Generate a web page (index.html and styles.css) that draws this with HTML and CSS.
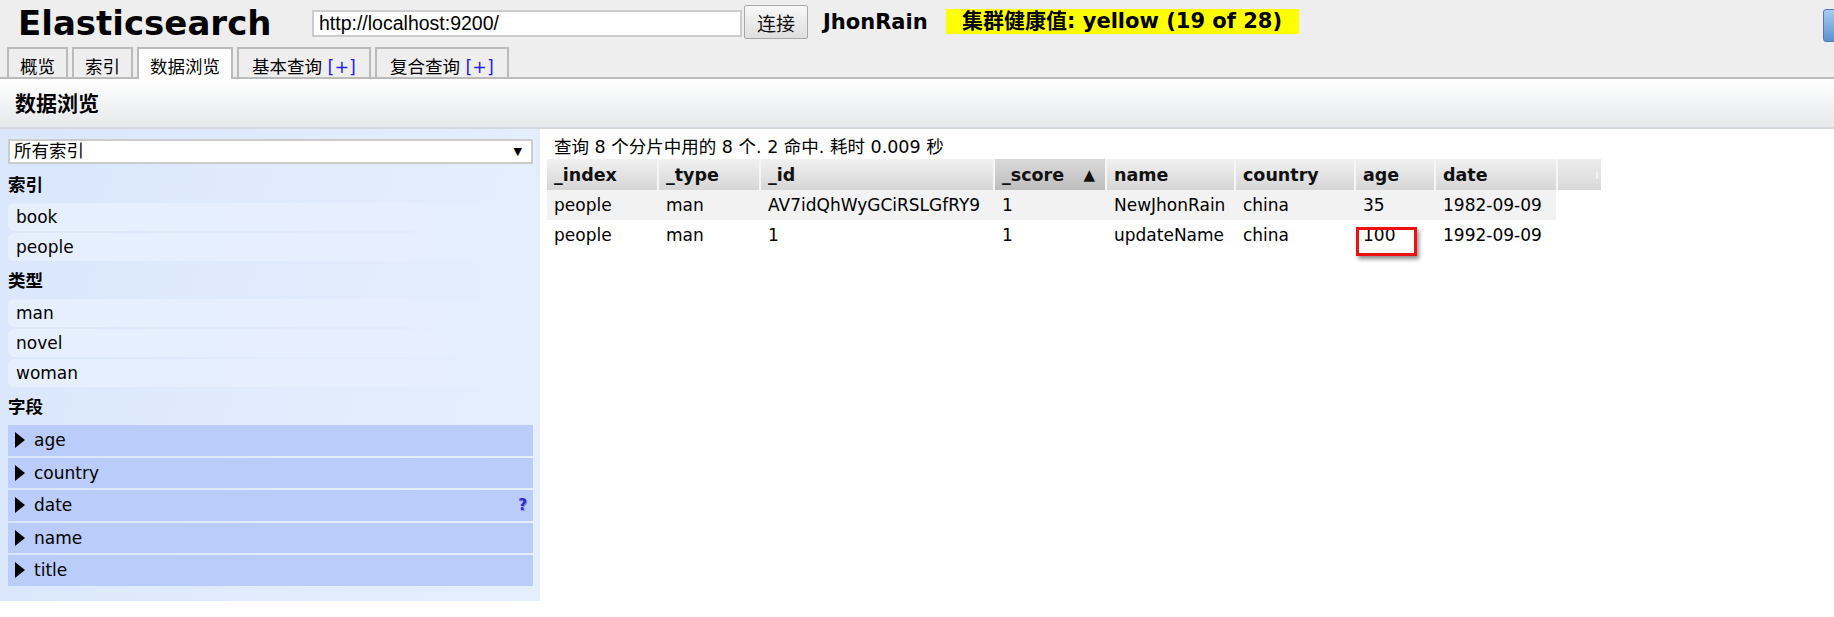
FILE: index.html
```html
<!DOCTYPE html>
<html lang="zh">
<head>
<meta charset="utf-8">
<title>Elasticsearch</title>
<link rel="stylesheet" href="styles.css">
</head>
<body>
<header class="header">
  <div class="header-top">
    <h1 class="logo">Elasticsearch</h1>
    <input class="url" type="text" value="http://localhost:9200/">
    <button class="connect">连接</button>
    <span class="cluster-name">JhonRain</span>
    <span class="health">集群健康值: yellow (19 of 28)</span>
    <span class="corner-btn"></span>
  </div>
  <nav class="tabs">
    <span class="tab">概览</span>
    <span class="tab">索引</span>
    <span class="tab active">数据浏览</span>
    <span class="tab">基本查询 <span class="plus">[+]</span></span>
    <span class="tab">复合查询 <span class="plus">[+]</span></span>
  </nav>
</header>
<div class="page-title">数据浏览</div>
<div class="browser">
  <aside class="sidebar">
    <div class="select">所有索引<span class="caret">▼</span></div>
    <h3 class="group">索引</h3>
    <div class="item">book</div>
    <div class="item">people</div>
    <h3 class="group">类型</h3>
    <div class="item">man</div>
    <div class="item">novel</div>
    <div class="item">woman</div>
    <h3 class="group">字段</h3>
    <div class="field"><span class="tri"></span>age</div>
    <div class="field"><span class="tri"></span>country</div>
    <div class="field"><span class="tri"></span>date<span class="help">?</span></div>
    <div class="field"><span class="tri"></span>name</div>
    <div class="field"><span class="tri"></span>title</div>
  </aside>
  <main class="results">
    <div class="summary">查询 8 个分片中用的 8 个. 2 命中. 耗时 0.009 秒</div>
    <div class="grid">
      <div class="thead">
        <div class="th">_index</div>
        <div class="th">_type</div>
        <div class="th">_id</div>
        <div class="th sorted">_score<span class="arrow">▲</span></div>
        <div class="th">name</div>
        <div class="th">country</div>
        <div class="th">age</div>
        <div class="th">date</div>
        <div class="th blank"><span class="grip"></span></div>
      </div>
      <div class="row odd">
        <div class="td">people</div>
        <div class="td">man</div>
        <div class="td">AV7idQhWyGCiRSLGfRY9</div>
        <div class="td">1</div>
        <div class="td">NewJhonRain</div>
        <div class="td">china</div>
        <div class="td">35</div>
        <div class="td">1982-09-09</div>
      </div>
      <div class="row">
        <div class="td">people</div>
        <div class="td">man</div>
        <div class="td">1</div>
        <div class="td">1</div>
        <div class="td">updateName</div>
        <div class="td">china</div>
        <div class="td marked">100</div>
        <div class="td">1992-09-09</div>
      </div>
    </div>
  </main>
</div>
</body>
</html>
```

FILE: styles.css
```css
* { box-sizing: border-box; }
html, body { margin: 0; padding: 0; }
body {
  width: 1834px;
  height: 617px;
  overflow: hidden;
  background: #ffffff;
  color: #000;
  font-family: "DejaVu Sans", "Noto Sans CJK SC", sans-serif;
  font-size: 17px;
}

/* ---------- header ---------- */
.header {
  background: #eeeeee;
  border-bottom: 2px solid #bbbbbb;
}
.header-top {
  height: 47px;
  display: flex;
  align-items: flex-start;
  padding-left: 18px;
}
.logo {
  margin: 6px 0 0;
  width: 294px;
  font-size: 34px;
  line-height: 34px;
  font-weight: bold;
}
.url {
  margin: 10px 0 0;
  width: 430px;
  height: 27px;
  border: 2px solid #cccccc;
  padding: 0 5px;
  font-family: "Liberation Sans", Arial, sans-serif;
  font-size: 19.5px;
  color: #000;
  background: #fff;
  outline: none;
}
.connect {
  margin: 5px 0 0 2px;
  width: 64px;
  height: 34px;
  padding: 0;
  border: 1px solid #a9a9a9;
  border-radius: 2px;
  background: linear-gradient(#f8f8f8, #dedede);
  font-family: "Noto Sans CJK SC", sans-serif;
  font-size: 19px;
  color: #111;
}
.cluster-name {
  margin: 9px 0 0 15px;
  min-width: 108px;
  font-size: 21px;
  line-height: 27px;
  font-weight: bold;
}
.health {
  margin: 9px 0 0 15px;
  height: 25px;
  padding: 0 17px 0 16px;
  background: #ffff00;
  font-size: 21px;
  line-height: 25px;
  font-weight: bold;
}
.corner-btn {
  margin: 9px -19px 0 auto;
  width: 30px;
  height: 33px;
  border: 1px solid #5877bb;
  border-radius: 3px;
  background: linear-gradient(#a8cbef, #5a92d1);
}

/* ---------- tabs ---------- */
.tabs {
  height: 30px;
  display: flex;
  align-items: flex-start;
  gap: 4px;
  padding-left: 7px;
}
.tab {
  height: 30px;
  padding: 8px 11px 0;
  border: 2px solid #bbbbbb;
  border-bottom: 0;
  background: #eeeeee;
  font-size: 17.5px;
  line-height: 20px;
  white-space: nowrap;
}
.tab:nth-child(n+4) { padding: 8px 13px 0; }
.tab.active {
  height: 32px;
  margin-bottom: -2px;
  background: #ffffff;
}
.plus { color: #2323f0; }

/* ---------- page title ---------- */
.page-title {
  height: 50px;
  display: flex;
  align-items: center;
  padding: 0 0 2px 15px;
  border-bottom: 2px solid #d3d8de;
  background: linear-gradient(#ffffff, #e6e8ea);
  font-size: 21px;
  font-weight: bold;
}

/* ---------- body ---------- */
.browser {
  display: flex;
  align-items: flex-start;
}
.sidebar {
  width: 540px;
  flex: none;
  padding: 10px 7px 15.5px 8px;
  background: linear-gradient(100deg, #d9e6fc 0%, #e2ecfd 60%, #e5eefd 100%);
}
.select {
  height: 25px;
  margin-bottom: 3px;
  display: flex;
  align-items: center;
  padding: 0 9px 0 4px;
  border: 2px solid #cccccc;
  background: #ffffff;
  font-size: 17.5px;
  line-height: 21px;
}
.caret {
  margin-left: auto;
  font-size: 11px;
  font-family: "DejaVu Sans", sans-serif;
}
.group {
  margin: 0;
  padding: 6px 0;
  font-size: 17.5px;
  line-height: 24px;
  font-weight: bold;
}
.item {
  height: 28px;
  margin-bottom: 2px;
  padding-left: 8px;
  border-radius: 6px;
  background: linear-gradient(to right, #e6effe 0%, #e7effe 75%, rgba(231, 239, 254, 0) 100%);
  line-height: 29px;
}
.field {
  height: 30.5px;
  margin-bottom: 2px;
  display: flex;
  align-items: center;
  padding: 0 6px 0 7px;
  background: #b9ccfa;
}
.field:last-child { margin-bottom: 0; }
.tri {
  width: 0;
  height: 0;
  margin-right: 9px;
  border-left: 10px solid #000;
  border-top: 8px solid transparent;
  border-bottom: 8px solid transparent;
}
.help {
  margin-left: auto;
  color: #2a2ae0;
  font-weight: bold;
  font-size: 15px;
  text-shadow: 1px 1px 1px rgba(0, 0, 80, 0.35);
}

/* ---------- results ---------- */
.results {
  flex: 1;
  padding-left: 7px;
}
.summary {
  padding: 7px 0 0 7px;
  line-height: 23px;
  font-size: 17.5px;
}
.thead {
  display: grid;
  grid-template-columns: 112px 102px 234px 112px 129px 120px 80px 122px 43px;
  height: 31px;
}
.th {
  display: flex;
  align-items: center;
  padding: 1px 0 0 7px;
  border-right: 2px solid #f6f6f6;
  background: linear-gradient(#f1f1f1, #d6d6d6);
  font-size: 17.5px;
  font-weight: bold;
  color: #111;
}
.th.sorted {
  background: linear-gradient(#d9d9d9, #bebebe);
  padding-right: 10px;
}
.arrow {
  margin-left: auto;
  font-size: 15px;
}
.th.blank {
  border-right: 0;
  background: linear-gradient(#ececec, #d9d9d9);
  justify-content: flex-end;
  padding-right: 3px;
}
.grip {
  width: 2px;
  height: 7px;
  background: #f4f4f4;
}
.row {
  display: grid;
  grid-template-columns: 112px 102px 234px 112px 129px 120px 80px 120px;
  width: 1009px;
  height: 30px;
}
.row.odd { background: #f2f2f2; }
.td {
  padding-left: 7px;
  line-height: 31px;
  white-space: nowrap;
}
.marked { position: relative; }
.marked::after {
  content: "";
  position: absolute;
  left: 0;
  top: 7px;
  width: 55px;
  height: 23px;
  border: 3px solid #ee1111;
  box-shadow: 2px 3px 4px rgba(0, 0, 0, 0.45);
}
```
